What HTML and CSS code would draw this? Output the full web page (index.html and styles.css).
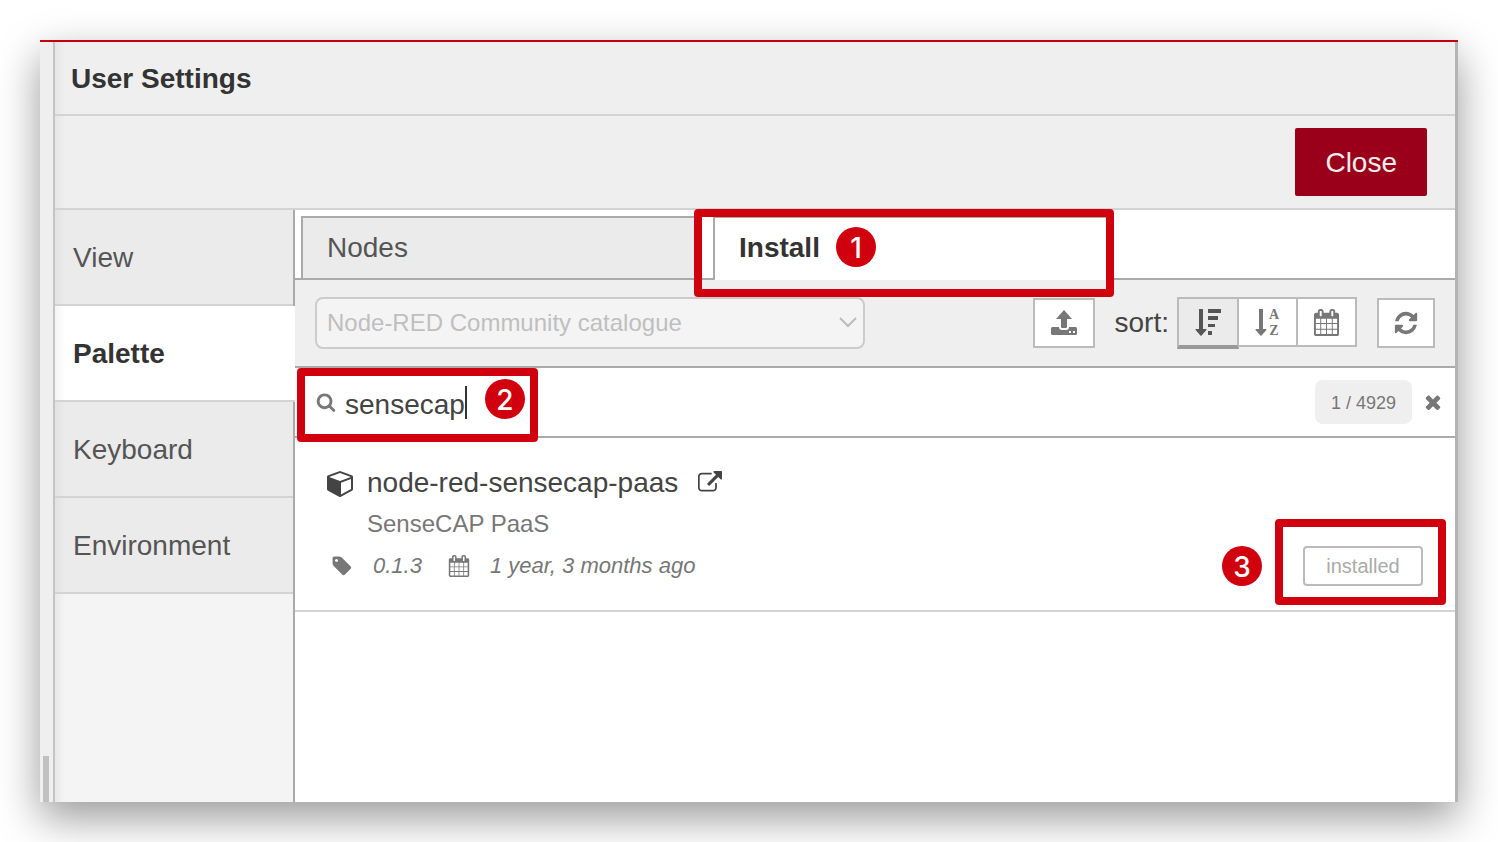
FILE: index.html
```
<!DOCTYPE html>
<html lang="en">
<head>
    <meta charset="UTF-8">
    <meta name="viewport" content="width=device-width, initial-scale=1.0">
    <title>User Settings</title>
    <link rel="stylesheet" href="styles.css">
</head>
<body>
    <div class="window">
        <div class="gutter"><div class="gutter-handle"></div></div>
        <div class="tray">
            <header class="tray-header">
                <h1>User Settings</h1>
            </header>
            <div class="tray-toolbar">
                <button type="button" class="close-button">Close</button>
            </div>
            <div class="tray-body">
                <nav class="side-nav">
                    <a href="#">View</a>
                    <a href="#" class="active">Palette</a>
                    <a href="#">Keyboard</a>
                    <a href="#">Environment</a>
                </nav>
                <main class="palette">
                    <div class="tabs">
                        <a href="#" class="tab">Nodes</a>
                        <a href="#" class="tab active">Install</a>
                        <div class="mark mark-install"></div>
                        <span class="step step-install">1</span>
                    </div>

                    <div class="toolbar">
                        <div class="catalogue">
                            <select aria-label="Catalogue" disabled>
                                <option>Node-RED Community catalogue</option>
                            </select>
                            <svg class="chevron" width="18" height="11" viewBox="0 0 18 11"><path d="M1 1l8 8 8-8" fill="none" stroke="#bbb" stroke-width="2"/></svg>
                        </div>
                        <button type="button" class="tool-button upload" aria-label="Upload module">
                            <svg width="28" height="28" viewBox="0 0 28 28">
                                <path d="M14 1l8 9h-5v8q0 1-1 1h-4q-1 0-1-1v-8H6z"/>
                                <path fill-rule="evenodd" d="M2.500 18H9q0 3 3 3h4q3 0 3-3h6.500q1.500 0 1.500 1.500v5q0 1.500-1.500 1.500h-23Q1 26 1 24.500v-5Q1 18 2.500 18zM19 22v2h2v-2zM23 22v2h2v-2z"/>
                            </svg>
                        </button>
                        <span class="sort-label">sort:</span>
                        <div class="sort-group">
                            <button type="button" class="tool-button active" aria-label="Sort by relevance">
                                <svg width="28" height="28" viewBox="0 0 28 28">
                                    <path d="M5 1h4v20h3q1 0 .4 1L7.600 27.500q-.6.600-1.200 0L1.600 22Q1 21 2 21h3z"/>
                                    <path d="M14 1h13v4H14zM14 8h10v4H14zM14 16h7v3H14zM14 23h4v4H14z"/>
                                </svg>
                            </button>
                            <button type="button" class="tool-button" aria-label="Sort by name">
                                <svg width="28" height="28" viewBox="0 0 28 28">
                                    <path d="M5 1h4v20h3q1 0 .4 1L7.600 27.500q-.6.600-1.200 0L1.600 22Q1 21 2 21h3z"/>
                                    <text class="az" x="20" y="11">A</text>
                                    <text class="az" x="20" y="27">Z</text>
                                </svg>
                            </button>
                            <button type="button" class="tool-button" aria-label="Sort by date">
                                <svg width="27" height="27" viewBox="0 0 1792 1792"><path id="calendar" d="M192 1664h288v-288h-288v288zm352 0h320v-288h-320v288zm-352-352h288v-320h-288v320zm352 0h320v-320h-320v320zm-352-384h288v-288h-288v288zm736 736h320v-288h-320v288zm-384-736h320v-288h-320v288zm768 736h288v-288h-288v288zm-384-352h320v-320h-320v320zm-352-864v-288q0-13-9.500-22.500t-22.500-9.500h-64q-13 0-22.500 9.500t-9.500 22.500v288q0 13 9.500 22.500t22.500 9.500h64q13 0 22.500-9.500t9.500-22.500zm736 864h288v-320h-288v320zm-384-384h320v-288h-320v288zm384 0h288v-288h-288v288zm32-480v-288q0-13-9.500-22.500t-22.500-9.500h-64q-13 0-22.500 9.500t-9.500 22.500v288q0 13 9.500 22.500t22.500 9.500h64q13 0 22.500-9.500t9.500-22.500zm384-64v1280q0 52-38 90t-90 38h-1408q-52 0-90-38t-38-90v-1280q0-52 38-90t90-38h128v-96q0-66 47-113t113-47h64q66 0 113 47t47 113v96h384v-96q0-66 47-113t113-47h64q66 0 113 47t47 113v96h128q52 0 90 38t38 90z"/></svg>
                            </button>
                        </div>
                        <button type="button" class="tool-button refresh" aria-label="Refresh">
                            <svg width="26" height="26" viewBox="0 0 1792 1792"><path d="M1639 1056q0 5-1 7-64 268-268 434.500t-478 166.500q-146 0-282.500-55t-243.500-157l-129 129q-19 19-45 19t-45-19-19-45v-448q0-26 19-45t45-19h448q26 0 45 19t19 45-19 45l-137 137q71 66 161 102t187 36q134 0 250-65t186-179q11-17 53-117 8-23 30-23h192q13 0 22.500 9.500t9.500 22.500zm25-800v448q0 26-19 45t-45 19h-448q-26 0-45-19t-19-45 19-45l138-138q-148-137-349-137-134 0-250 65t-186 179q-11 17-53 117-8 23-30 23h-199q-13 0-22.500-9.500t-9.500-22.500v-7q65-268 270-434.500t480-166.500q146 0 284 55.500t245 156.500l130-129q19-19 45-19t45 19 19 45z"/></svg>
                        </button>
                    </div>

                    <div class="search">
                        <svg width="20" height="20" viewBox="0 0 1792 1792"><path d="M1216 832q0-185-131.500-316.500t-316.500-131.500-316.500 131.500-131.500 316.500 131.500 316.500 316.500 131.500 316.500-131.500 131.500-316.500zm512 832q0 52-38 90t-90 38q-54 0-90-38l-343-342q-179 124-399 124-143 0-273.500-55.500t-225-150-150-225-55.500-273.500 55.500-273.500 150-225 225-150 273.500-55.500 273.500 55.500 225 150 150 225 55.500 273.500q0 220-124 399l343 343q37 37 37 90z"/></svg>
                        <input type="text" value="sensecap" aria-label="Search modules">
                        <span class="caret"></span>
                        <span class="count">1 / 4929</span>
                        <button type="button" class="clear" aria-label="Clear search">
                            <svg width="22" height="22" viewBox="0 0 1792 1792"><path d="M1490 1322q0 40-28 68l-136 136q-28 28-68 28t-68-28l-294-294-294 294q-28 28-68 28t-68-28l-136-136q-28-28-28-68t28-68l294-294-294-294q-28-28-28-68t28-68l136-136q28-28 68-28t68 28l294 294 294-294q28-28 68-28t68 28l136 136q28 28 28 68t-28 68l-294 294 294 294q28 28 28 68z"/></svg>
                        </button>
                        <div class="mark mark-search"></div>
                        <span class="step step-search">2</span>
                    </div>

                    <article class="module">
                        <div class="module-name">
                            <svg width="28" height="28" viewBox="0 0 1792 1792"><path d="M896 1629l640-349v-636l-640 233v752zm-64-865l698-254-698-254-698 254zm832-252v768q0 35-18 65t-49 47l-704 384q-28 16-61 16t-61-16l-704-384q-31-17-49-47t-18-65v-768q0-40 23-73t61-47l704-256q22-8 44-8t44 8l704 256q38 14 61 47t23 73z"/></svg>
                            <span>node-red-sensecap-paas</span>
                            <a href="#" aria-label="Open module page"><svg width="24" height="24" viewBox="0 0 1792 1792"><path d="M1408 928v320q0 119-84.500 203.500t-203.500 84.500h-832q-119 0-203.500-84.500t-84.500-203.500v-832q0-119 84.500-203.500t203.500-84.500h704q14 0 23 9t9 23v64q0 14-9 23t-23 9h-704q-66 0-113 47t-47 113v832q0 66 47 113t113 47h832q66 0 113-47t47-113v-320q0-14 9-23t23-9h64q14 0 23 9t9 23zm384-864v512q0 26-19 45t-45 19-45-19l-176-176-652 652q-10 10-23 10t-23-10l-114-114q-10-10-10-23t10-23l652-652-176-176q-19-19-19-45t19-45 45-19h512q26 0 45 19t19 45z"/></svg></a>
                        </div>
                        <p class="module-description">SenseCAP PaaS</p>
                        <div class="module-meta">
                            <svg class="tag" width="22" height="22" viewBox="0 0 1792 1792"><path d="M576 448q0-53-37.500-90.500t-90.500-37.500-90.500 37.500-37.500 90.500 37.500 90.500 90.500 37.500 90.500-37.500 37.500-90.500zm1067 576q0 53-37 90l-491 492q-39 37-91 37-53 0-90-37l-715-716q-38-37-64.500-101t-26.500-117v-416q0-52 38-90t90-38h416q53 0 117 26.500t102 64.500l715 714q37 39 37 91z"/></svg>
                            <span class="version">0.1.3</span>
                            <svg class="date" width="22" height="22" viewBox="0 0 1792 1792"><use href="#calendar"/></svg>
                            <span>1 year, 3 months ago</span>
                            <button type="button" class="installed" disabled>installed</button>
                        </div>
                        <div class="mark mark-installed"></div>
                        <span class="step step-installed">3</span>
                    </article>
                </main>
            </div>
        </div>
    </div>
</body>
</html>
```

FILE: styles.css
```
* {
    box-sizing: border-box;
}

body {
    margin: 0;
    padding: 40px;
    min-height: 100vh;
    display: flex;
    background: #fff;
    color: #444;
    font-family: "Liberation Sans", Arial, sans-serif;
    font-size: 28px;
    line-height: 32px;
    overflow: hidden;
}

a {
    color: inherit;
    text-decoration: none;
}

button,
input,
select {
    font: inherit;
    margin: 0;
}

svg {
    display: block;
    flex: none;
    fill: currentColor;
}

.window {
    flex: 1;
    display: flex;
    background: #efefef;
    border-top: 2px solid #c7000b;
    box-shadow: 0 16px 40px rgba(0, 0, 0, 0.4);
}

.gutter {
    width: 15px;
    border-right: 2px solid #c4c4c4;
    padding-left: 3px;
    display: flex;
    align-items: flex-end;
}

.gutter-handle {
    width: 6px;
    height: 46px;
    background: #c0c0c0;
}

.tray {
    flex: 1;
    display: flex;
    flex-direction: column;
    border-right: 3px solid #b4b4b4;
    background: linear-gradient(to right, #e6e6e6, #efefef 10px);
}

.tray-header {
    padding: 21px 16px 19px;
    border-bottom: 2px solid #d3d3d3;
}

.tray-header h1 {
    margin: 0;
    font-size: 28px;
    color: #333;
}

.tray-toolbar {
    display: flex;
    justify-content: flex-end;
    padding: 12px 28px;
    border-bottom: 2px solid #d3d3d3;
}

.close-button {
    border: none;
    border-radius: 2px;
    padding: 19px 30px 17px;
    background: #9a001a;
    color: #eee;
}

.tray-body {
    flex: 1;
    display: flex;
}

/* side navigation */
.side-nav {
    width: 240px;
    background: linear-gradient(to right, #e8e8e8, #f4f4f4 10px);
    border-right: 2px solid #aaa;
}

.side-nav a {
    display: block;
    padding: 32px 18px 30px;
    border-bottom: 2px solid #d3d3d3;
    background: linear-gradient(to right, #e2e2e2, #ebebeb 10px);
    color: #555;
}

.side-nav a.active {
    margin-right: -2px;
    background: linear-gradient(to right, #f4f4f4, #fff 10px);
    color: #333;
    font-weight: bold;
}

/* palette pane */
.palette {
    flex: 1;
    background: #fff;
}

.tabs {
    position: relative;
    display: flex;
    gap: 14px;
    height: 70px;
    padding: 6px 6px 0;
    border-bottom: 2px solid #aaa;
}

.tab {
    width: 398px;
    padding: 14px 24px;
    border: 2px solid #aaa;
    border-bottom: none;
    background: #ebebeb;
    color: #555;
}

.tab.active {
    margin-bottom: -2px;
    background: #fff;
    color: #333;
    font-weight: bold;
}

.toolbar {
    display: flex;
    align-items: center;
    padding: 17px 20px;
    background: #efefef;
    border-bottom: 2px solid #aaa;
}

.catalogue {
    position: relative;
    width: 550px;
    margin-right: auto;
}

.catalogue select {
    display: block;
    width: 100%;
    height: 52px;
    padding: 0 10px;
    appearance: none;
    border: 2px solid #ccc;
    border-radius: 8px;
    background: #f4f4f4;
    color: #bfbfbf;
    font-size: 24px;
    opacity: 1;
}

.chevron {
    position: absolute;
    top: 20px;
    right: 8px;
}

.tool-button {
    display: flex;
    align-items: center;
    justify-content: center;
    width: 59px;
    height: 50px;
    padding: 0;
    border: 2px solid #bbb;
    background: #fff;
    color: #777;
}

.tool-button.upload {
    width: 62px;
}

.tool-button.refresh {
    width: 58px;
}

.sort-label {
    margin: 0 8px 0 20px;
}

.sort-group {
    display: flex;
    align-items: flex-start;
    margin-right: 20px;
}

.sort-group .tool-button + .tool-button {
    border-left: none;
}

.sort-group .tool-button.active {
    width: 62px;
    height: 52px;
    border-bottom: 4px solid #999;
    background: #ebebeb;
    color: #555;
}

.az {
    font-family: "Liberation Serif", serif;
    font-size: 14px;
    font-weight: bold;
    text-anchor: middle;
}

.tool-button svg {
    overflow: visible;
}

.search {
    position: relative;
    display: flex;
    align-items: center;
    height: 70px;
    padding: 0 11px 0 21px;
    border-bottom: 2px solid #aaa;
    color: #777;
}

.search input {
    width: 120px;
    margin-left: 9px;
    padding: 6px 0 0;
    border: none;
    outline: none;
    background: none;
    color: #444;
}

.caret {
    width: 2px;
    height: 33px;
    margin-right: auto;
    background: #333;
}

.count {
    padding: 7px 16px 5px;
    border-radius: 8px;
    background: #efefef;
    font-size: 18px;
}

.clear {
    margin-left: 10px;
    padding: 0;
    border: none;
    background: none;
    color: #777;
}

/* module entry */
.module {
    position: relative;
    padding: 29px 32px 24px;
    border-bottom: 2px solid #d3d3d3;
}

.module-name {
    display: flex;
    align-items: center;
    gap: 12px;
}

.module-name a {
    margin-left: 8px;
}

.module-description {
    margin: 9px 0 6px 40px;
    color: #777;
    font-size: 24px;
}

.module-meta {
    display: flex;
    align-items: center;
    color: #777;
    font-size: 22px;
    font-style: italic;
}

.module-meta .tag {
    margin: 0 20px 0 4px;
}

.module-meta .date {
    margin: 0 20px 0 26px;
}

.installed {
    margin-left: auto;
    width: 120px;
    height: 40px;
    padding: 0;
    border: 2px solid #bbb;
    border-radius: 4px;
    background: #fff;
    color: #aaa;
    font-size: 20px;
    font-style: normal;
}

/* step markers */
.mark {
    position: absolute;
    z-index: 1;
    border: 8px solid #d0000f;
    border-radius: 4px;
    pointer-events: none;
}

.step {
    position: absolute;
    z-index: 1;
    width: 40px;
    height: 40px;
    border-radius: 50%;
    background: #d0000f;
    color: #fff;
    font: 500 28px/42px Inter, sans-serif;
    text-align: center;
}

.mark-install {
    top: -1px;
    left: 399px;
    width: 420px;
    height: 88px;
}

.step-install {
    top: 17px;
    left: 541px;
}

.mark-search {
    top: 0;
    left: 2px;
    width: 241px;
    height: 74px;
}

.step-search {
    top: 11px;
    left: 190px;
}

.mark-installed {
    top: 81px;
    right: 9px;
    width: 171px;
    height: 86px;
}

.step-installed {
    top: 108px;
    right: 193px;
}
```
